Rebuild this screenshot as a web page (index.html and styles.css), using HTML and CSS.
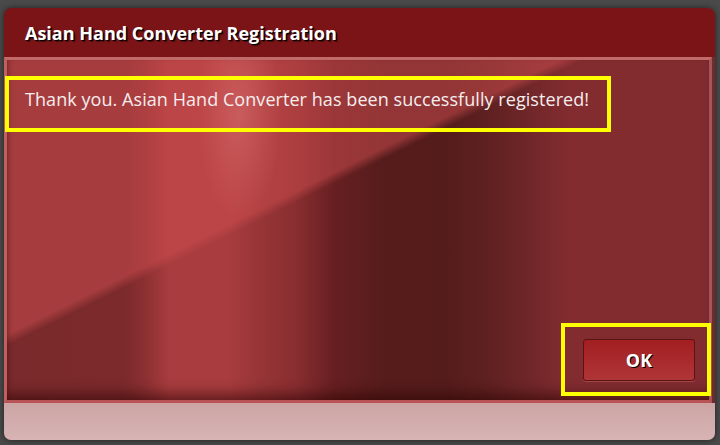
FILE: index.html
```html
<!DOCTYPE html>
<html lang="en">
<head>
<meta charset="utf-8">
<title>Asian Hand Converter Registration</title>
<link rel="stylesheet" href="styles.css">
</head>
<body>
<div class="dialog">
  <div class="header">
    <h1 class="title">Asian Hand Converter Registration</h1>
  </div>
  <div class="panel">
    <div class="message mark">Thank you. Asian Hand Converter has been successfully registered!</div>
    <div class="actions">
      <div class="ok-wrap mark">
        <button class="ok-btn" type="button">OK</button>
      </div>
    </div>
  </div>
  <div class="footer"></div>
</div>
</body>
</html>
```
FILE: styles.css
```css
html, body {
  margin: 0;
  padding: 0;
}
body {
  background: #4a4a4a;
  width: 720px;
  height: 445px;
  overflow: hidden;
  font-family: "Open Sans", "Liberation Sans", sans-serif;
}
.dialog {
  margin: 8px 5px 0 4px;
  width: 711px;
  height: 432px;
  border-radius: 8px 8px 7px 7px;
  background: #6e2c2e;
  box-shadow: 0 0 6px rgba(0, 0, 0, 0.55);
  display: flex;
  flex-direction: column;
  overflow: hidden;
}
.header {
  height: 49px;
  flex: none;
  background: #7b1416;
  display: flex;
  align-items: center;
  padding-left: 21px;
}
.title {
  margin: 0;
  color: #fff;
  font-size: 18px;
  font-weight: 700;
  text-shadow: 1px 1px 0 #000, 2px 2px 1px rgba(0, 0, 0, 0.45);
}
.panel {
  height: 346px;
  flex: none;
  margin-right: 3px;
  box-sizing: border-box;
  padding: 16px 0 4px 0;
  display: flex;
  flex-direction: column;
  justify-content: space-between;
  border-top: 3px solid #c06a6a;
  border-left: 3px solid #c05e60;
  border-right: 3px solid #a8525a;
  border-bottom: 3px solid #b85456;
  background:
    radial-gradient(ellipse 42px 105px at 233px 55px, rgba(228, 130, 130, 0.38), rgba(228, 130, 130, 0)),
    linear-gradient(153.6deg, rgba(208, 78, 80, 0.5) 246px, rgba(208, 78, 80, 0) 256px),
    linear-gradient(90deg,
      #7a2a2c 0px, #7c2a2c 118px, #8c3032 138px, #a83c3e 162px, #a83c3e 222px,
      #963436 255px, #8a2e30 288px, #661f21 328px, #561c1c 378px, #551c1c 440px,
      #5e2020 478px, #6e2628 518px, #822c30 562px, #822c30 100%);
  box-shadow:
    inset 0 -14px 14px -8px rgba(40, 0, 0, 0.55),
    inset 3px 0 4px -2px rgba(60, 0, 0, 0.35);
}
.mark {
  border: 4px solid #ffff00;
  box-sizing: border-box;
}
.message {
  margin-left: -2px;
  width: 606px;
  height: 56px;
  padding: 7px 0 0 16px;
  color: #f6eeee;
  font-size: 18px;
  line-height: 24px;
  letter-spacing: 0.06px;
  font-weight: 400;
}
.actions {
  display: flex;
  justify-content: flex-end;
  margin-right: -2px;
}
.ok-wrap {
  width: 150px;
  height: 73px;
  padding: 12px 12px 11px 18px;
}
.ok-btn {
  width: 112px;
  height: 42px;
  margin: 0;
  padding: 0;
  border: 1px solid #5c1212;
  border-radius: 3px;
  background: linear-gradient(#a21e21, #b03537);
  box-shadow: 0 1px 0 rgba(230, 140, 140, 0.3);
  color: #fff;
  font-family: "Open Sans", "Liberation Sans", sans-serif;
  font-size: 18px;
  font-weight: 700;
  text-shadow: 1px 1px 0 #000;
  cursor: pointer;
}
.footer {
  flex: 1;
  background: linear-gradient(#cca4a4, #d8b4b4);
}
```
